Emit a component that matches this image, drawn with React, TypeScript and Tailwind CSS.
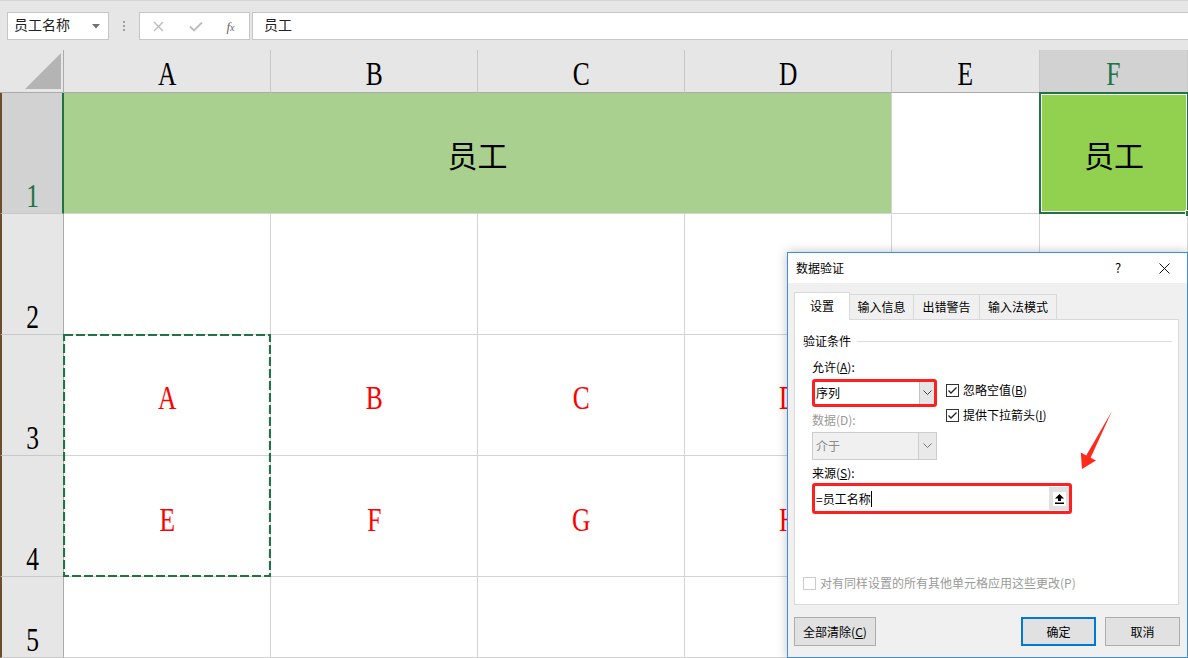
import React from "react";

const serifCls = "font-['Liberation_Serif','Times_New_Roman',serif]";

function Chevron({ color = "#444444" }: { color?: string }) {
  return (
    <svg width="9" height="6" viewBox="0 0 9 6">
      <polyline points="0.5,0.5 4.5,4.5 8.5,0.5" fill="none" stroke={color} strokeWidth="1" />
    </svg>
  );
}

function CheckBox({ checked, disabled }: { checked?: boolean; disabled?: boolean }) {
  return (
    <div
      className={`w-[13px] h-[13px] shrink-0 border bg-white flex items-center justify-center ${
        disabled ? "border-[#cccccc]" : "border-[#333333]"
      }`}
    >
      {checked && (
        <svg width="11" height="11" viewBox="0 0 11 11">
          <polyline points="1.5,5.5 4,8 9.5,2.5" fill="none" stroke="#222222" strokeWidth="1.3" />
        </svg>
      )}
    </div>
  );
}

function Big({ children, color }: { children: React.ReactNode; color?: string }) {
  return (
    <span className={`${serifCls} inline-block scale-x-75 text-[34px] leading-none ${color ?? ""}`}>
      {children}
    </span>
  );
}

function RowHead({ n, sel }: { n: number; sel?: boolean }) {
  return (
    <div
      className={`border-l-2 border-l-[#6e4c2c] border-b border-b-[#c8c8c8] flex items-end justify-center ${
        sel
          ? "bg-[#d2d2d2] text-[#217346] border-r-2 border-r-[#217346]"
          : "bg-[#e6e6e6] text-black border-r border-r-[#ababab]"
      }`}
    >
      <Big>{n}</Big>
    </div>
  );
}

function ColHead({ l, sel }: { l: string; sel?: boolean }) {
  return (
    <div
      className={`border-r border-r-[#c8c8c8] border-b flex items-center justify-center pt-[5px] ${
        sel ? "bg-[#d2d2d2] text-[#217346] border-b-[#217346]" : "bg-[#e6e6e6] text-black border-b-[#ababab]"
      }`}
    >
      <Big>{l}</Big>
    </div>
  );
}

function Cell({ children, pt }: { children?: React.ReactNode; pt?: string }) {
  return (
    <div className={`bg-white border-r border-b border-[#d4d4d4] flex items-center justify-center ${pt ?? ""}`}>
      {children}
    </div>
  );
}

export default function App() {
  return (
    <div className="relative w-[1188px] h-[658px] overflow-hidden bg-[#e6e6e6] font-['Noto_Sans_CJK_SC',sans-serif]">
      {/* formula bar */}
      <div className="h-[50px] border-t border-[#d4d4d4] flex items-start pt-[11px]">
        <div className="ml-[7px] w-[102px] h-[28px] border border-[#c6c6c6] bg-white flex items-center justify-between pl-[6px] pr-[8px] text-[14px] text-[#222222]">
          <span className="pb-[3px]">员工名称</span>
          <svg width="8" height="5" viewBox="0 0 8 5">
            <polygon points="0,0 8,0 4,4.5" fill="#707070" />
          </svg>
        </div>
        <div className="w-[30px] h-[28px] flex flex-col items-center justify-center gap-[2px]">
          <div className="w-[2px] h-[2px] bg-[#a0a0a0]" />
          <div className="w-[2px] h-[2px] bg-[#a0a0a0]" />
          <div className="w-[2px] h-[2px] bg-[#a0a0a0]" />
        </div>
        <div className="w-[111px] h-[28px] border border-[#c6c6c6] bg-white flex items-center">
          <div className="w-[37px] flex justify-center">
            <svg width="11" height="11" viewBox="0 0 11 11">
              <path d="M1 1 L10 10 M10 1 L1 10" stroke="#bdbdbd" strokeWidth="1.4" />
            </svg>
          </div>
          <div className="w-[37px] flex justify-center">
            <svg width="14" height="11" viewBox="0 0 14 11">
              <polyline points="1,5.5 5,9.5 13,1.5" fill="none" stroke="#bdbdbd" strokeWidth="1.8" />
            </svg>
          </div>
          <div className="w-[33px] flex justify-center">
            <span className="font-['Liberation_Serif',serif] italic text-[13px] text-[#666666] leading-none">
              f<span className="text-[10px]">x</span>
            </span>
          </div>
        </div>
        <div className="ml-[2px] flex-1 h-[28px] border border-r-0 border-[#c6c6c6] bg-white flex items-center pl-[11px] text-[14px] text-[#222222]">
          <span className="pb-[3px]">员工</span>
        </div>
      </div>

      {/* sheet */}
      <div className="grid grid-cols-[64px_207px_207px_207px_207px_148px_148px] grid-rows-[43px_121px_121px_121px_121px_81px] bg-white">
        {/* header row */}
        <div className="bg-[#e6e6e6] border-r border-r-[#ababab] border-b border-b-[#ababab] flex items-end justify-end pr-[2px] pb-[3px]">
          <svg width="36" height="36" viewBox="0 0 36 36">
            <polygon points="0,36 36,36 36,0" fill="#b4b4b4" />
          </svg>
        </div>
        <ColHead l="A" />
        <ColHead l="B" />
        <ColHead l="C" />
        <ColHead l="D" />
        <ColHead l="E" />
        <ColHead l="F" sel />

        {/* row 1 */}
        <RowHead n={1} sel />
        <div className="col-span-4 bg-[#a9d08e] border-r border-b border-[#d4d4d4] flex items-center justify-center pt-[1px]">
          <span className="text-[30px] leading-none text-black">员工</span>
        </div>
        <Cell />
        <div className="relative bg-[#92d050] border-b border-[#d4d4d4] flex items-center justify-center pt-[2px]">
          <span className="text-[30px] leading-none text-black">员工</span>
          <div className="absolute -left-[1px] -top-[1px] -right-[1px] -bottom-[1px] border-2 border-[#217346]">
            <div className="w-full h-full border border-white" />
          </div>
          <div className="absolute -right-[4px] -bottom-[4px] w-[7px] h-[7px] bg-[#217346] border border-white" />
        </div>

        {/* row 2 */}
        <RowHead n={2} />
        <Cell />
        <Cell />
        <Cell />
        <Cell />
        <Cell />
        <Cell />

        {/* row 3 */}
        <RowHead n={3} />
        <div className="relative bg-white border-r border-b border-[#d4d4d4] flex items-center justify-center pt-[6px]">
          <Big color="text-[#ff0000]">A</Big>
          <svg className="absolute -left-[1px] -top-[1px] z-10" width="208" height="243" viewBox="0 0 208 243">
            <rect x="1" y="1" width="206" height="241" fill="none" stroke="#217346" strokeWidth="2.2" strokeDasharray="9 3" />
          </svg>
        </div>
        <Cell pt="pt-[6px]">
          <Big color="text-[#ff0000]">B</Big>
        </Cell>
        <Cell pt="pt-[6px]">
          <Big color="text-[#ff0000]">C</Big>
        </Cell>
        <Cell pt="pt-[6px]">
          <Big color="text-[#ff0000]">D</Big>
        </Cell>
        <Cell />
        <Cell />

        {/* row 4 */}
        <RowHead n={4} />
        <Cell pt="pt-[7px]">
          <Big color="text-[#ff0000]">E</Big>
        </Cell>
        <Cell pt="pt-[7px]">
          <Big color="text-[#ff0000]">F</Big>
        </Cell>
        <Cell pt="pt-[7px]">
          <Big color="text-[#ff0000]">G</Big>
        </Cell>
        <Cell pt="pt-[7px]">
          <Big color="text-[#ff0000]">H</Big>
        </Cell>
        <Cell />
        <Cell />

        {/* row 5 */}
        <RowHead n={5} />
        <Cell />
        <Cell />
        <Cell />
        <Cell />
        <Cell />
        <Cell />
      </div>

      {/* dialog */}
      <div className="absolute left-[787px] top-[252px] w-[401px] h-[406px] border border-[#3d8ee0] bg-[#f0f0f0] text-[12px] text-black flex flex-col shadow-[0_0_10px_rgba(0,0,0,0.25)]">
        <div className="h-[30px] bg-white flex items-center pl-[8px] shrink-0">
          <span>数据验证</span>
          <div className="ml-auto flex items-center">
            <div className="w-[46px] flex justify-center text-[13px]">?</div>
            <div className="w-[46px] flex justify-center">
              <svg width="11" height="11" viewBox="0 0 11 11">
                <path d="M0.5 0.5 L10.5 10.5 M10.5 0.5 L0.5 10.5" stroke="#111111" strokeWidth="1" />
              </svg>
            </div>
          </div>
        </div>

        <div className="pl-[6px] pt-[9px] flex flex-col">
          {/* tabs */}
          <div className="flex items-end h-[27px] relative z-10">
            <div className="h-[28px] -mb-[1px] w-[56px] border border-b-0 border-[#d9d9d9] bg-white flex items-center justify-center pb-[1px]">
              设置
            </div>
            <div className="h-[25px] w-[64px] border-t border-r border-[#d9d9d9] flex items-center justify-center">
              输入信息
            </div>
            <div className="h-[25px] w-[66px] border-t border-r border-[#d9d9d9] flex items-center justify-center">
              出错警告
            </div>
            <div className="h-[25px] w-[77px] border-t border-r border-[#d9d9d9] flex items-center justify-center">
              输入法模式
            </div>
          </div>

          {/* panel */}
          <div className="relative w-[385px] h-[286px] border border-[#d9d9d9] bg-white flex flex-col pl-[8px] pr-[6px]">
            <div className="mt-[13px] h-[16px] flex items-center gap-[6px]">
              <span>验证条件</span>
              <div className="flex-1 h-px bg-[#dcdcdc]" />
            </div>

            <div className="pl-[9px] flex flex-col">
              <div className="mt-[10px] flex">
                <div className="w-[125px] flex flex-col">
                  <div className="h-[16px] flex items-center">
                    允许(<u>A</u>):
                  </div>
                  <div className="mt-[4px] h-[28px] border-[3px] border-[#ff1f1f] rounded-[3px] flex bg-white">
                    <div className="flex-1 flex items-center pl-[1px]">序列</div>
                    <div className="w-[15px] bg-[#e6e6e6] border-l border-[#c4c4c4] flex items-center justify-center">
                      <Chevron />
                    </div>
                  </div>
                  <div className="mt-[5px] h-[16px] flex items-center text-[#9a9a9a]">数据(D):</div>
                  <div className="mt-[4px] h-[28px] border border-[#cccccc] bg-[#f0f0f0] flex">
                    <div className="flex-1 flex items-center pl-[3px] text-[#8a8a8a]">介于</div>
                    <div className="w-[18px] border-l border-[#cccccc] bg-[#e9e9e9] flex items-center justify-center">
                      <Chevron color="#777777" />
                    </div>
                  </div>
                </div>
                <div className="ml-[9px] pt-[23px] flex flex-col gap-[9px]">
                  <div className="h-[16px] flex items-center gap-[4px]">
                    <CheckBox checked />
                    <span>
                      忽略空值(<u>B</u>)
                    </span>
                  </div>
                  <div className="h-[16px] flex items-center gap-[4px]">
                    <CheckBox checked />
                    <span>
                      提供下拉箭头(<u>I</u>)
                    </span>
                  </div>
                </div>
              </div>

              <div className="mt-[5px] h-[16px] flex items-center">
                来源(<u>S</u>):
              </div>
              <div className="mt-[2px] w-[260px] h-[31px] border-[3px] border-[#ff1f1f] rounded-[3px] flex bg-white">
                <div className="flex-1 flex items-center pl-[1px]">
                  <span>=员工名称</span>
                  <div className="w-px h-[16px] bg-black" />
                </div>
                <div className="w-[20px] my-[1px] bg-[#e1e1e1] flex items-center justify-center">
                  <div className="w-[13px] h-[14px] bg-white flex items-center justify-center">
                    <svg width="9" height="10" viewBox="0 0 9 10">
                      <polygon points="4.5,0 9,4.5 6,4.5 6,7 3,7 3,4.5 0,4.5" fill="#000000" />
                      <rect x="0" y="8.5" width="9" height="1.5" fill="#000000" />
                    </svg>
                  </div>
                </div>
              </div>
            </div>

            <div className="mt-auto mb-[13px] h-[16px] flex items-center gap-[4px] text-[#9a9a9a]">
              <CheckBox disabled />
              <span>对有同样设置的所有其他单元格应用这些更改(P)</span>
            </div>
          </div>

          {/* buttons */}
          <div className="mt-[12px] flex pr-[7px]">
            <div className="w-[82px] h-[29px] bg-[#e1e1e1] border border-[#adadad] flex items-center justify-center">
              全部清除(<u>C</u>)
            </div>
            <div className="ml-auto w-[75px] h-[29px] bg-[#e1e1e1] border-2 border-[#0078d7] flex items-center justify-center">
              确定
            </div>
            <div className="ml-[9px] w-[75px] h-[29px] bg-[#e1e1e1] border border-[#adadad] flex items-center justify-center">
              取消
            </div>
          </div>
        </div>

        {/* red annotation arrow */}
        <svg className="absolute left-0 top-0 pointer-events-none" width="400" height="300" viewBox="0 0 400 300">
          <polygon points="324,158 302.6,204.7 308,207.5 294,216 292.8,199.5 298.2,202.4" fill="#ff2a1a" />
        </svg>
      </div>
    </div>
  );
}
